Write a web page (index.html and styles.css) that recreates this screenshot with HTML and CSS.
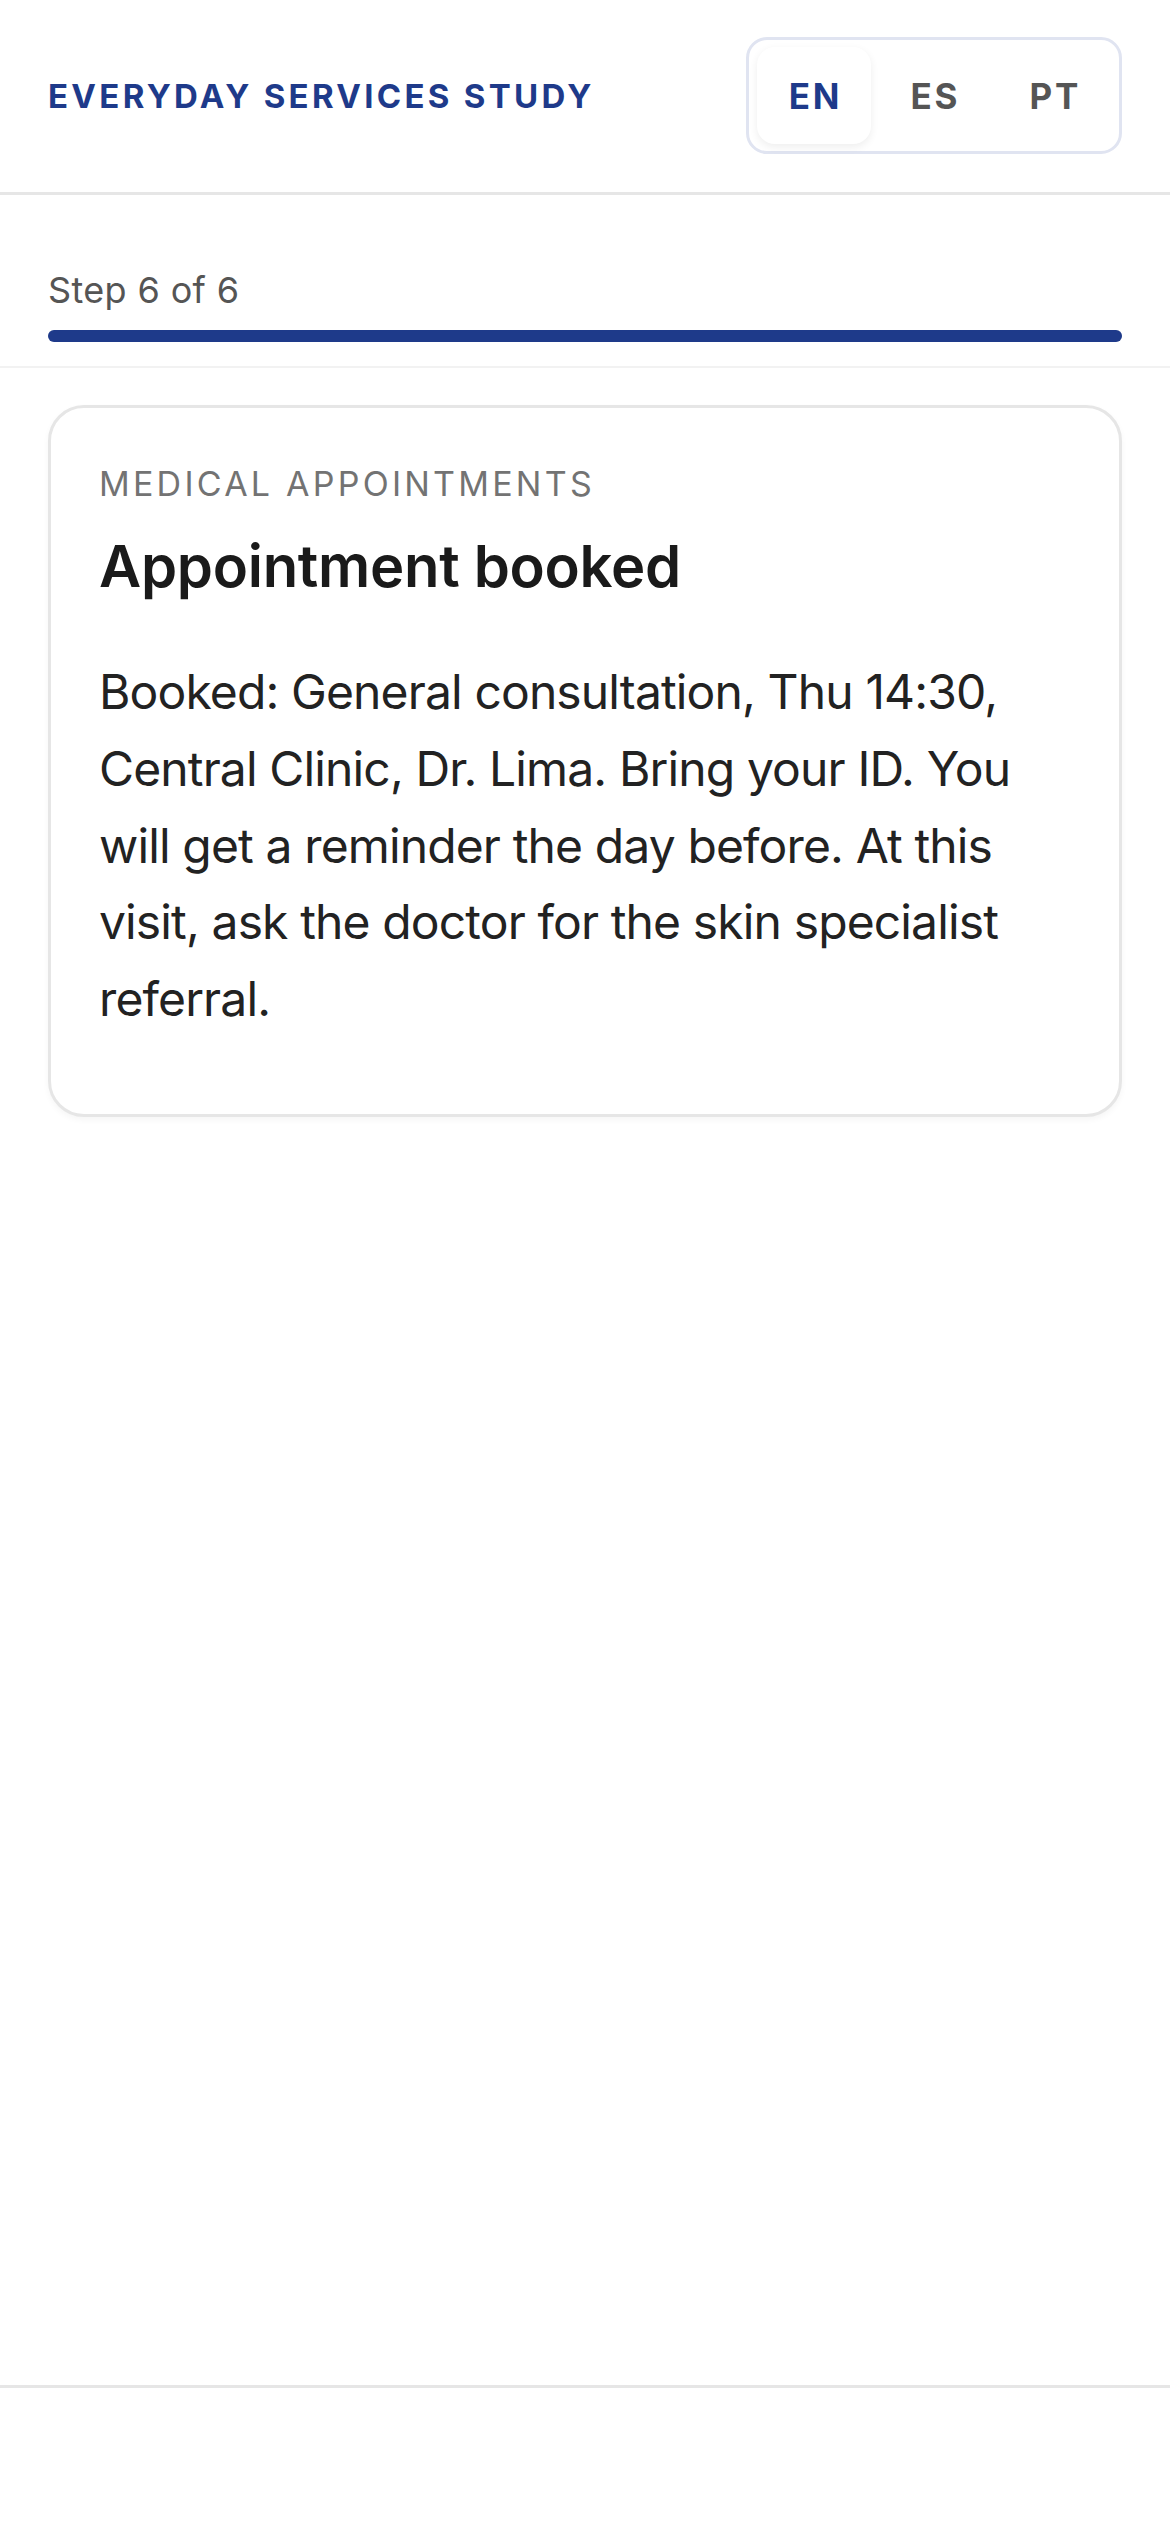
FILE: index.html
```html
<html>

<head>
	<title>Everyday Services Study</title>
	<link rel="stylesheet" href="styles.css">
</head>
<body>
	<div class="page">
		<div class="topbar">
			<span class="brand">EVERYDAY SERVICES STUDY</span>
			<div class="langs">
				<button type="button" class="lang active">EN</button>
				<button type="button" class="lang">ES</button>
				<button type="button" class="lang">PT</button>
			</div>
		</div>
		<div class="progress">
			<div class="progress-label">Step 6 of 6</div>
			<div class="progress-track"><div class="progress-fill" style="width: 100%"></div></div>
		</div>
		<div class="content">
			<div class="card">
				<div class="card-kicker">MEDICAL APPOINTMENTS</div>
				<h1 class="card-title">Appointment booked</h1>
				<p class="card-text">Booked: General consultation, Thu 14:30, Central Clinic, Dr. Lima. Bring your ID. You will get a reminder the day before. At this visit, ask the doctor for the skin specialist referral.</p>
			</div>
		</div>
		<div class="bottombar"></div>
	</div>
</body>

</html>
```

FILE: styles.css
```css
body { margin: 0; background: #fff; font-family: Inter, "Noto Sans", sans-serif; }
.page { display: flex; flex-direction: column; min-height: 100vh; }

.topbar { display: flex; align-items: center; justify-content: space-between; padding: 37px 48px 38px; border-bottom: 3px solid #e6e6e6; }
.brand { color: #1e3a8a; font-size: 33px; font-weight: 700; letter-spacing: 0.1em; }
.langs { display: flex; gap: 6px; padding: 7px 8px; border: 3px solid #e0e4f1; border-radius: 21px; }
.lang { width: 114px; height: 97px; border: 0; border-radius: 18px; background: transparent; color: #555; font-family: inherit; font-size: 35px; font-weight: 700; letter-spacing: 0.08em; padding: 0 0 0 0.08em; }
.lang.active { background: #fff; color: #1e3a8a; box-shadow: 0 3px 9px rgba(0,0,0,0.07); }

.progress { padding: 70px 48px 24px; border-bottom: 2px solid #f2f2f2; }
.progress-label { color: #555; font-size: 36px; line-height: 50px; letter-spacing: 0.01em; }
.progress-track { margin-top: 15px; height: 12px; border-radius: 6px; background: #e8ebf3; }
.progress-fill { height: 12px; border-radius: 6px; background: #1e3a8a; }

.content { flex: 1; padding: 37px 48px; }
.card { border: 3px solid #e6e6e6; border-radius: 36px; padding: 48px 48px 76px; background: #fff; box-shadow: 0 3px 6px rgba(0,0,0,0.04); }
.card-kicker { color: #737373; font-size: 34px; line-height: 56px; letter-spacing: 0.095em; }
.card-title { margin: 18px 0 52px; color: #1a1a1a; font-size: 58px; font-weight: 600; line-height: 72px; letter-spacing: -0.005em; }
.card-text { margin: 0; color: #222; font-size: 48px; line-height: 1.6; letter-spacing: -0.018em; }

.bottombar { height: 144px; border-top: 3px solid #e6e6e6; background: #fff; }
```
